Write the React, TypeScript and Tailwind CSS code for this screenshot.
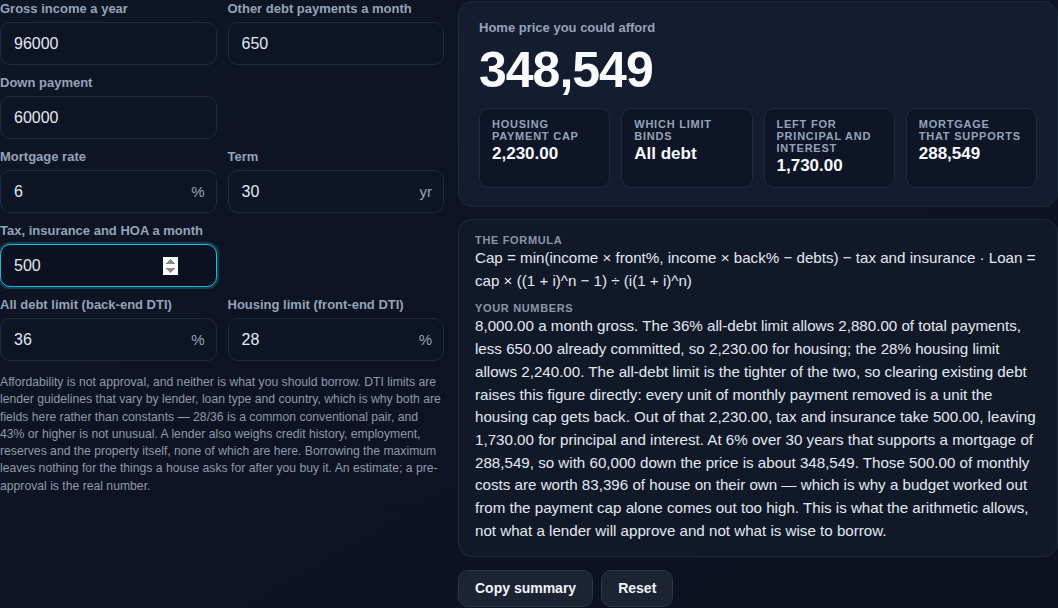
import { useState } from 'react';

type FieldProps = {
  label: string;
  value: string;
  suffix?: string;
  focused?: boolean;
  onChange: (v: string) => void;
};

function Field({ label, value, suffix, focused, onChange }: FieldProps) {
  return (
    <label className="flex flex-col gap-[5px]">
      <span className="text-[13px] leading-4 font-bold text-[#94a3b8]">{label}</span>
      <div className="relative">
        <input
          type={focused ? 'number' : 'text'}
          autoFocus={focused}
          value={value}
          onChange={(e) => onChange(e.target.value)}
          className={
            focused
              ? 'h-[43px] w-full rounded-[10px] border border-[#22b8cf] bg-[#0b1120] pl-[13px] pr-[38px] text-[16px] text-[#e2e8f0] outline-none shadow-[0_0_0_2px_rgba(34,184,207,0.25)]'
              : 'h-[43px] w-full rounded-[10px] border border-[#1f2a3c] bg-[#0d1424] pl-[13px] pr-[38px] text-[16px] text-[#e2e8f0] outline-none'
          }
        />
        {suffix && (
          <span className="pointer-events-none absolute right-[12px] top-1/2 -translate-y-1/2 text-[15px] text-[#94a3b8]">
            {suffix}
          </span>
        )}
      </div>
    </label>
  );
}

function Stat({ label, value }: { label: string; value: string }) {
  return (
    <div className="rounded-[10px] border border-[#1f2a3c] bg-[#0e1526] px-[12px] pt-[9px] pb-[11px]">
      <div className="text-[11px] leading-[12px] font-bold uppercase tracking-[0.07em] text-[#94a3b8]">{label}</div>
      <div className="mt-[2px] text-[17px] leading-[20px] font-bold text-[#f8fafc]">{value}</div>
    </div>
  );
}

export default function App() {
  const [income, setIncome] = useState('96000');
  const [debts, setDebts] = useState('650');
  const [down, setDown] = useState('60000');
  const [rate, setRate] = useState('6');
  const [term, setTerm] = useState('30');
  const [tax, setTax] = useState('500');
  const [back, setBack] = useState('36');
  const [front, setFront] = useState('28');

  return (
    <div
      className="min-h-[608px] bg-[#0d1322] bg-gradient-to-br from-[#0e1525] via-[#0d1322] to-[#0c1220] text-[#e2e8f0]"
      style={{ fontFamily: '"Liberation Sans", Arial, sans-serif' }}
    >
      <div className="grid grid-cols-[444px_600px] gap-[14px]">
        <div className="flex flex-col gap-[10px] pt-[1px]">
          <div className="grid grid-cols-2 gap-[11px]">
            <Field label="Gross income a year" value={income} onChange={setIncome} />
            <Field label="Other debt payments a month" value={debts} onChange={setDebts} />
          </div>
          <div className="grid grid-cols-2 gap-[11px]">
            <Field label="Down payment" value={down} onChange={setDown} />
          </div>
          <div className="grid grid-cols-2 gap-[11px]">
            <Field label="Mortgage rate" value={rate} suffix="%" onChange={setRate} />
            <Field label="Term" value={term} suffix="yr" onChange={setTerm} />
          </div>
          <div className="grid grid-cols-2 gap-[11px]">
            <Field label="Tax, insurance and HOA a month" value={tax} focused onChange={setTax} />
          </div>
          <div className="grid grid-cols-2 gap-[11px]">
            <Field label="All debt limit (back-end DTI)" value={back} suffix="%" onChange={setBack} />
            <Field label="Housing limit (front-end DTI)" value={front} suffix="%" onChange={setFront} />
          </div>
          <p className="mt-[3px] text-[12.2px] leading-[17.3px] text-[#8e99aa]">
            Affordability is not approval, and neither is what you should borrow. DTI limits are lender guidelines that
            vary by lender, loan type and country, which is why both are fields here rather than constants — 28/36 is a
            common conventional pair, and 43% or higher is not unusual. A lender also weighs credit history, employment,
            reserves and the property itself, none of which are here. Borrowing the maximum leaves nothing for the things a
            house asks for after you buy it. An estimate; a pre-approval is the real number.
          </p>
        </div>

        <div className="flex flex-col gap-[13px] pt-[1px]">
          <section className="rounded-[14px] border border-[#1f2a3c] bg-[#141c2f] px-[20px] pt-[18px] pb-[18px]">
            <div className="text-[13px] leading-4 font-bold text-[#94a3b8]">Home price you could afford</div>
            <div className="mt-[6px] text-[50px] leading-[56px] font-bold tracking-[-0.02em] text-[#f8fafc]">348,549</div>
            <div className="mt-[10px] grid grid-cols-4 gap-[11px]">
              <Stat label="Housing payment cap" value="2,230.00" />
              <Stat label="Which limit binds" value="All debt" />
              <Stat label="Left for principal and interest" value="1,730.00" />
              <Stat label="Mortgage that supports" value="288,549" />
            </div>
          </section>

          <section className="-mt-[1px] rounded-[14px] border border-[#1f2a3c] bg-[#111929] px-[16px] pt-[13px] pb-[14px]">
            <div className="text-[11px] leading-[14px] font-bold uppercase tracking-[0.06em] text-[#8b95a5]">The formula</div>
            <p className="text-[15.15px] leading-[22.7px] text-[#e2e8f0]">
              Cap = min(income × front%, income × back% − debts) − tax and insurance · Loan = cap × ((1 + i)^n − 1) ÷ (i(1
              + i)^n)
            </p>
            <div className="mt-[9px] text-[11px] leading-[14px] font-bold uppercase tracking-[0.06em] text-[#8b95a5]">
              Your numbers
            </div>
            <p className="text-[15.15px] leading-[22.7px] text-[#e2e8f0]">
              8,000.00 a month gross. The 36% all-debt limit allows 2,880.00 of total payments, less 650.00 already
              committed, so 2,230.00 for housing; the 28% housing limit allows 2,240.00. The all-debt limit is the tighter
              of the two, so clearing existing debt raises this figure directly: every unit of monthly payment removed is a
              unit the housing cap gets back. Out of that 2,230.00, tax and insurance take 500.00, leaving 1,730.00 for
              principal and interest. At 6% over 30 years that supports a mortgage of 288,549, so with 60,000 down the
              price is about 348,549. Those 500.00 of monthly costs are worth 83,396 of house on their own — which is why a
              budget worked out from the payment cap alone comes out too high. This is what the arithmetic allows, not what
              a lender will approve and not what is wise to borrow.
            </p>
          </section>

          <div className="flex gap-[8px]">
            <button className="h-[37px] rounded-[10px] border border-[#2a3548] bg-[#1c2433] px-[16px] text-[14px] font-bold text-[#f1f5f9]">
              Copy summary
            </button>
            <button className="h-[37px] rounded-[10px] border border-[#2a3548] bg-[#1c2433] px-[16px] text-[14px] font-bold text-[#f1f5f9]">
              Reset
            </button>
          </div>
        </div>
      </div>
    </div>
  );
}
